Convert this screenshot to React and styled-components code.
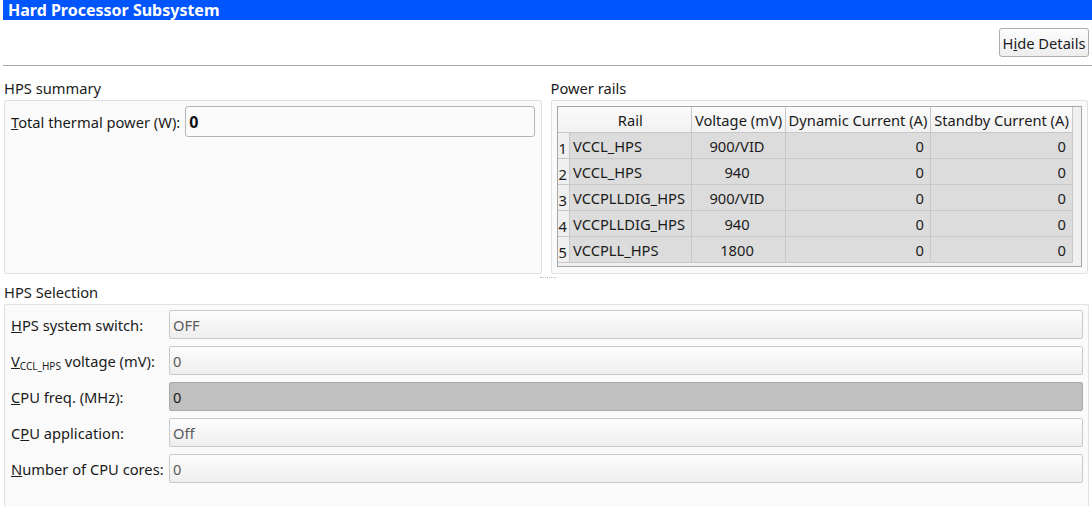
import React from "react";
import styled, { createGlobalStyle } from "styled-components";

const GlobalStyle = createGlobalStyle`
  html, body {
    margin: 0;
    padding: 0;
    background: #ffffff;
  }
  body {
    font-family: "Noto Sans", "Open Sans", sans-serif;
    font-size: 14.7px;
    color: #1b1b1b;
  }
`;

const rails = [
  { name: "VCCL_HPS", voltage: "900/VID", dynamic: "0", standby: "0" },
  { name: "VCCL_HPS", voltage: "940", dynamic: "0", standby: "0" },
  { name: "VCCPLLDIG_HPS", voltage: "900/VID", dynamic: "0", standby: "0" },
  { name: "VCCPLLDIG_HPS", voltage: "940", dynamic: "0", standby: "0" },
  { name: "VCCPLL_HPS", voltage: "1800", dynamic: "0", standby: "0" },
];

function App() {
  return (
    <Page>
      <GlobalStyle />
      <TitleBar>Hard Processor Subsystem</TitleBar>
      <Toolbar>
        <ToolButton>
          H<u>i</u>de Details
        </ToolButton>
      </Toolbar>

      <TopSection>
        <Column>
          <SectionLabel>HPS summary</SectionLabel>
          <GroupBox>
            <SummaryRow>
              <Label>
                <u>T</u>otal thermal power (W):
              </Label>
              <ValueBox>0</ValueBox>
            </SummaryRow>
          </GroupBox>
        </Column>
        <Column>
          <SectionLabel>Power rails</SectionLabel>
          <GroupBox>
            <TableFrame>
              <RailTable>
                <colgroup>
                  <col style={{ width: 12 }} />
                  <col style={{ width: 122 }} />
                  <col style={{ width: 94 }} />
                  <col style={{ width: 145 }} />
                  <col style={{ width: 142 }} />
                </colgroup>
                <thead>
                  <tr>
                    <CornerCell />
                    <HeadCell>Rail</HeadCell>
                    <HeadCell>Voltage (mV)</HeadCell>
                    <HeadCell>Dynamic Current (A)</HeadCell>
                    <HeadCell>Standby Current (A)</HeadCell>
                  </tr>
                </thead>
                <tbody>
                  {rails.map((r, i) => (
                    <tr key={i}>
                      <IndexCell>{i + 1}</IndexCell>
                      <Cell align="left">{r.name}</Cell>
                      <Cell align="center">{r.voltage}</Cell>
                      <Cell align="right">{r.dynamic}</Cell>
                      <Cell align="right">{r.standby}</Cell>
                    </tr>
                  ))}
                </tbody>
              </RailTable>
            </TableFrame>
          </GroupBox>
        </Column>
      </TopSection>

      <Splitter />

      <BottomSection>
        <SectionLabel>HPS Selection</SectionLabel>
        <GroupBox className="selection">
          <FieldRow>
            <FieldLabel>
              <u>H</u>PS system switch:
            </FieldLabel>
            <FieldInput>OFF</FieldInput>
          </FieldRow>
          <FieldRow>
            <FieldLabel>
              <u>V</u>
              <Sub>CCL_HPS</Sub> voltage (mV):
            </FieldLabel>
            <FieldInput>0</FieldInput>
          </FieldRow>
          <FieldRow>
            <FieldLabel>
              <u>C</u>PU freq. (MHz):
            </FieldLabel>
            <FieldInput disabled>0</FieldInput>
          </FieldRow>
          <FieldRow>
            <FieldLabel>
              C<u>P</u>U application:
            </FieldLabel>
            <FieldInput>Off</FieldInput>
          </FieldRow>
          <FieldRow>
            <FieldLabel>
              <u>N</u>umber of CPU cores:
            </FieldLabel>
            <FieldInput>0</FieldInput>
          </FieldRow>
        </GroupBox>
      </BottomSection>
    </Page>
  );
}

export default App;

const Page = styled.div`
  width: 1092px;
  height: 507px;
  overflow: hidden;
  display: flex;
  flex-direction: column;
`;

const TitleBar = styled.div`
  margin-left: 3px;
  height: 20px;
  line-height: 20px;
  padding-left: 5px;
  background-color: #0055ff;
  color: #ffffff;
  font-size: 16px;
  font-weight: 700;
  white-space: nowrap;
`;

const Toolbar = styled.div`
  display: flex;
  justify-content: flex-end;
  align-items: flex-start;
  height: 37px;
  padding: 8px 3px 0 0;
  margin-left: 3px;
  border-bottom: 1px solid #a9a9a9;
`;

const ToolButton = styled.div`
  box-sizing: border-box;
  width: 90px;
  height: 29px;
  display: flex;
  align-items: center;
  justify-content: center;
  border: 1px solid #adadad;
  border-radius: 3px;
  background: linear-gradient(#fdfdfd, #ededed);
  color: #1b1b1b;
  white-space: nowrap;
  cursor: pointer;
`;

const TopSection = styled.div`
  display: flex;
  gap: 9px;
  padding: 12px 4px 0 4px;
`;

const Column = styled.div`
  flex: 1;
  display: flex;
  flex-direction: column;
`;

const SectionLabel = styled.div`
  height: 20px;
  line-height: 20px;
  margin-bottom: 2px;
  color: #1b1b1b;
`;

const GroupBox = styled.div`
  box-sizing: border-box;
  height: 174px;
  border: 1px solid #e1e1e1;
  border-radius: 2px;
  background-color: #fafafa;
  padding: 5px;
  &.selection {
    height: auto;
    flex: 1;
    padding: 5px 5px 0 5px;
    display: flex;
    flex-direction: column;
    gap: 7px;
    border-bottom: none;
  }
`;

const SummaryRow = styled.div`
  display: flex;
  align-items: center;
  gap: 5px;
  padding: 0 1px;
`;

const Label = styled.span`
  white-space: nowrap;
`;

const ValueBox = styled.div`
  box-sizing: border-box;
  flex: 1;
  height: 31px;
  display: flex;
  align-items: center;
  padding-left: 3px;
  border: 1px solid #b4b4b4;
  border-radius: 3px;
  background-color: #fafafa;
  font-size: 16px;
  font-weight: 700;
  color: #101010;
`;

const TableFrame = styled.div`
  box-sizing: border-box;
  height: 161px;
  border: 1px solid #a6a6a6;
  background-color: #f0f0f0;
  overflow: hidden;
`;

const RailTable = styled.table`
  border-collapse: collapse;
  table-layout: fixed;
  width: 515px;
  color: #1b1b1b;
`;

const HeadCell = styled.th`
  height: 25px;
  padding: 0 2px;
  font-weight: 400;
  text-align: center;
  white-space: nowrap;
  overflow: hidden;
  background: linear-gradient(#fbfbfb, #f1f1f1);
  border-right: 1px solid #c8c8c8;
  border-bottom: 1px solid #c8c8c8;
`;

const CornerCell = styled.th`
  height: 25px;
  padding: 0;
  background: linear-gradient(#fbfbfb, #f1f1f1);
  border-bottom: 1px solid #c8c8c8;
`;

const IndexCell = styled.td`
  height: 25px;
  padding: 0 0 0 1px;
  line-height: 20px;
  text-align: left;
  vertical-align: bottom;
  background-color: #f0f0f0;
  border-right: 1px solid #c8c8c8;
  border-bottom: 1px solid #c8c8c8;
`;

const Cell = styled.td`
  height: 25px;
  padding: 0 6px 0 3px;
  line-height: 20px;
  text-align: ${(p) => p.align};
  white-space: nowrap;
  overflow: hidden;
  background-color: #dcdcdc;
  border-right: 1px solid #c8c8c8;
  border-bottom: 1px solid #c8c8c8;
`;

const Splitter = styled.div`
  align-self: flex-start;
  margin: 3px 0 0 540px;
  width: 16px;
  height: 1px;
  border-top: 1px dotted #b8b8b8;
`;

const BottomSection = styled.div`
  flex: 1;
  display: flex;
  flex-direction: column;
  padding: 3px 3px 0 4px;
`;

const FieldRow = styled.div`
  display: flex;
  align-items: center;
  padding-left: 1px;
`;

const FieldLabel = styled.span`
  width: 158px;
  flex-shrink: 0;
  white-space: nowrap;
`;

const Sub = styled.span`
  font-size: 10px;
  position: relative;
  top: 3px;
`;

const FieldInput = styled.div`
  box-sizing: border-box;
  flex: 1;
  height: 29px;
  display: flex;
  align-items: center;
  padding-left: 3px;
  border: 1px solid ${(p) => (p.disabled ? "#a9a9a9" : "#c9c9c9")};
  border-radius: 2px;
  background: ${(p) =>
    p.disabled ? "#c0c0c0" : "linear-gradient(#fcfcfc, #efefef)"};
  color: ${(p) => (p.disabled ? "#1b1b1b" : "#5a5a5a")};
`;
